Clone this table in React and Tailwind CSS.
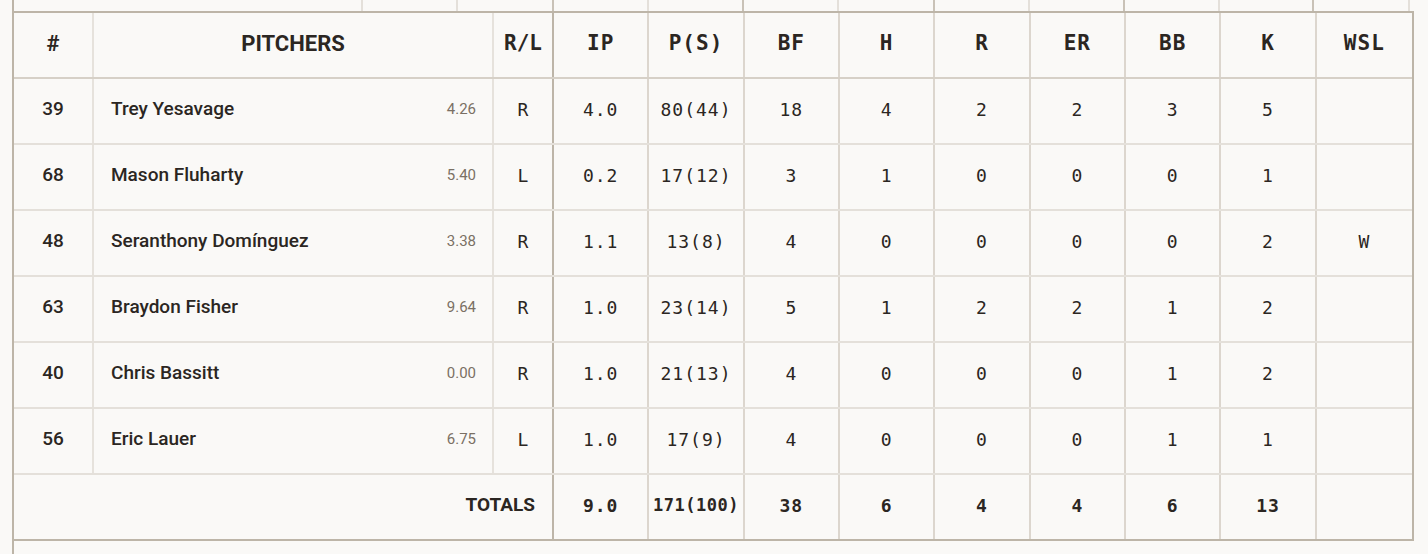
import React from "react";

const pitchers = [
  { num: 39, name: "Trey Yesavage", era: "4.26", hand: "R", ip: "4.0", ps: "80(44)", bf: 18, h: 4, r: 2, er: 2, bb: 3, k: 5, wsl: "" },
  { num: 68, name: "Mason Fluharty", era: "5.40", hand: "L", ip: "0.2", ps: "17(12)", bf: 3, h: 1, r: 0, er: 0, bb: 0, k: 1, wsl: "" },
  { num: 48, name: "Seranthony Domínguez", era: "3.38", hand: "R", ip: "1.1", ps: "13(8)", bf: 4, h: 0, r: 0, er: 0, bb: 0, k: 2, wsl: "W" },
  { num: 63, name: "Braydon Fisher", era: "9.64", hand: "R", ip: "1.0", ps: "23(14)", bf: 5, h: 1, r: 2, er: 2, bb: 1, k: 2, wsl: "" },
  { num: 40, name: "Chris Bassitt", era: "0.00", hand: "R", ip: "1.0", ps: "21(13)", bf: 4, h: 0, r: 0, er: 0, bb: 1, k: 2, wsl: "" },
  { num: 56, name: "Eric Lauer", era: "6.75", hand: "L", ip: "1.0", ps: "17(9)", bf: 4, h: 0, r: 0, er: 0, bb: 1, k: 1, wsl: "" },
];

const statCols = ["IP", "P(S)", "BF", "H", "R", "ER", "BB", "K", "WSL"];

const sans = "font-['Roboto','Liberation_Sans',sans-serif]";
const mono = "font-['DejaVu_Sans_Mono','Liberation_Mono',monospace]";

const rowGrid = "grid grid-cols-[80px_400px_60px_repeat(9,1fr)]";

// tail of the batting table sitting above
const topStrip = [
  { w: "w-[347px]", line: "" },
  { w: "w-[95px]", line: "border-l-2 border-[#e4e0da]" },
  { w: "w-[96px]", line: "border-l-2 border-[#e4e0da]" },
  { w: "w-[95px]", line: "border-l-2 border-[#c9c2b7]" },
  { w: "w-[95px]", line: "border-l-2 border-[#e4e0da]" },
  { w: "w-[95px]", line: "border-l-2 border-[#c9c2b7]" },
  { w: "w-[96px]", line: "border-l-2 border-[#e4e0da]" },
  { w: "w-[95px]", line: "border-l-2 border-[#c9c2b7]" },
  { w: "w-[95px]", line: "border-l-2 border-[#e4e0da]" },
  { w: "w-[95px]", line: "border-l-2 border-[#c9c2b7]" },
  { w: "w-[94px]", line: "border-l-2 border-[#e4e0da]" },
  { w: "w-[96px]", line: "border-l-2 border-[#c9c2b7]" },
  { w: "w-[40px]", line: "border-l-2 border-[#e4e0da]" },
];

const StatCell = ({ children, bold, last }) => (
  <div
    className={`flex items-center justify-center pb-[3px] ${mono} text-[18px] tracking-[1px] ${bold ? "font-bold" : ""} ${last ? "" : "border-r-2 border-[#dcd6ce]"}`}
  >
    {children}
  </div>
);

export default function App() {
  return (
    <div className="min-h-screen bg-[#faf9f7] text-[#2b2622] pl-[12px]">
      <div className="flex h-[11px] border-l-2 border-[#bdb5a8]">
        {topStrip.map((c, i) => (
          <div key={i} className={`${c.w} shrink-0 ${c.line}`} />
        ))}
      </div>

      <div className="w-[1402px] border-2 border-[#bdb5a8]">
        <div className={`${rowGrid} h-[66px] border-b-2 border-[#d6d0c7]`}>
          <div className={`flex items-center justify-center pb-[3px] ${sans} font-bold text-[22px] border-r-2 border-[#e6e2dc]`}>#</div>
          <div className={`flex items-center justify-center pb-[3px] ${sans} font-bold text-[22px] border-r-2 border-[#e6e2dc]`}>PITCHERS</div>
          <div className={`flex items-center justify-center pb-[3px] ${mono} font-bold text-[21px] border-r-2 border-[#bdb5a8]`}>R/L</div>
          {statCols.map((c, i) => (
            <div
              key={c}
              className={`flex items-center justify-center pb-[3px] ${mono} font-bold text-[21px] tracking-[1px] ${i === statCols.length - 1 ? "" : "border-r-2 border-[#dcd6ce]"}`}
            >
              {c}
            </div>
          ))}
        </div>

        {pitchers.map((p) => (
          <div key={p.num} className={`${rowGrid} h-[66px] border-b-2 border-[#e4e0da]`}>
            <div className={`flex items-center justify-center pb-[3px] ${sans} font-medium text-[19px] border-r-2 border-[#e6e2dc]`}>{p.num}</div>
            <div className="flex items-center justify-between pb-[3px] pl-[17px] pr-[16px] border-r-2 border-[#e6e2dc]">
              <span className={`${sans} font-medium text-[19px]`}>{p.name}</span>
              <span className={`${sans} text-[15px] text-[#7a7064]`}>{p.era}</span>
            </div>
            <div className={`flex items-center justify-center pb-[3px] ${mono} text-[18px] border-r-2 border-[#bdb5a8]`}>{p.hand}</div>
            <StatCell>{p.ip}</StatCell>
            <StatCell>{p.ps}</StatCell>
            <StatCell>{p.bf}</StatCell>
            <StatCell>{p.h}</StatCell>
            <StatCell>{p.r}</StatCell>
            <StatCell>{p.er}</StatCell>
            <StatCell>{p.bb}</StatCell>
            <StatCell>{p.k}</StatCell>
            <StatCell last>{p.wsl}</StatCell>
          </div>
        ))}

        <div className={`${rowGrid} h-[64px]`}>
          <div className={`col-span-3 flex items-center justify-end pb-[3px] pr-[17px] ${sans} font-bold text-[19px] border-r-2 border-[#bdb5a8]`}>TOTALS</div>
          <StatCell bold>9.0</StatCell>
          <div className={`flex items-center justify-center pb-[3px] ${mono} font-bold text-[17px] tracking-[0.5px] border-r-2 border-[#dcd6ce]`}>171(100)</div>
          <StatCell bold>38</StatCell>
          <StatCell bold>6</StatCell>
          <StatCell bold>4</StatCell>
          <StatCell bold>4</StatCell>
          <StatCell bold>6</StatCell>
          <StatCell bold>13</StatCell>
          <StatCell last bold></StatCell>
        </div>
      </div>

      <div className="h-[40px] border-l-2 border-[#bdb5a8]" />
    </div>
  );
}
